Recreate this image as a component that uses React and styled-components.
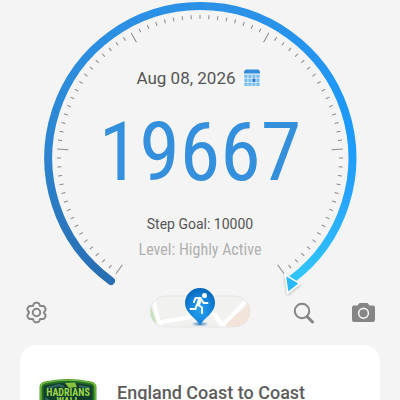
import styled, { createGlobalStyle } from "styled-components";

const GlobalStyle = createGlobalStyle`
* {
    box-sizing: border-box;
}
body {
    margin: 0;
    background: #f4f4f4;
    font-family: Roboto, sans-serif;
    color: #555;
    overflow-x: hidden;
}
`
const Page = styled.main`
display: flex;
flex-direction: column;
min-height: 100vh;
overflow: hidden;
`
const Dial = styled.section`
display: grid;
justify-items: center;
> * {
    grid-area: 1 / 1;
}
`
const Gauge = styled.svg`
display: block;
width: 320px;
height: 296px;
`
const Readout = styled.div`
display: flex;
flex-direction: column;
align-items: center;
padding-top: 66px;
white-space: nowrap;
`
const DateButton = styled.button`
display: flex;
align-items: center;
gap: 8px;
padding: 0 4px 0 0;
border: 0;
background: none;
color: #555;
font: 400 17px/24px Roboto, sans-serif;
cursor: pointer;
`
const Steps = styled.div`
font: 400 82px/96px "Roboto Condensed", "Liberation Sans Narrow", sans-serif;
color: #348fdd;
margin-top: 14px;
`
const Goal = styled.div`
font-size: 14px;
line-height: 20px;
margin-top: 14px;
`
const Level = styled.div`
font: 400 16px/20px "Roboto Condensed", "Liberation Sans Narrow", sans-serif;
color: #b0b0b0;
margin-top: 6px;
`
const Toolbar = styled.nav`
display: grid;
grid-template-columns: 1fr auto 1fr;
align-items: center;
height: 48px;
margin-top: -8px;
padding: 0 24px;
`
const Group = styled.div`
display: flex;
align-items: center;
justify-content: ${props => props.$end ? 'flex-end' : 'flex-start'};
gap: 36px;
`
const IconButton = styled.button`
display: flex;
padding: 0;
border: 0;
background: none;
color: #858585;
cursor: pointer;
`
const Card = styled.article`
display: flex;
align-items: flex-start;
gap: 20px;
flex: 1;
margin: 9px 20px 0;
padding: 33px 19px 0;
border-radius: 16px 16px 0 0;
background: #fff;
`
const CardTitle = styled.h2`
margin: 3px 0 0;
font-size: 18px;
line-height: 24px;
font-weight: 500;
color: #5c5c5c;
`

const SWEEP = 288
const TICKS = 80
const ticks = Array.from({ length: TICKS + 1 }, (_, i) => ({
    angle: 36 + (i * SWEEP) / TICKS,
    major: i % 16 === 0,
}))

const StepGauge = () => (
    <Gauge viewBox="40 0 320 296" aria-hidden="true">
        <defs>
            <linearGradient id="arcLeft" x1="0" y1="6" x2="0" y2="282" gradientUnits="userSpaceOnUse">
                <stop offset="0" stopColor="#2b91e6" />
                <stop offset="0.5" stopColor="#2d86d2" />
                <stop offset="1" stopColor="#286eb2" />
            </linearGradient>
            <linearGradient id="arcRight" x1="0" y1="6" x2="0" y2="282" gradientUnits="userSpaceOnUse">
                <stop offset="0" stopColor="#2b91e6" />
                <stop offset="0.45" stopColor="#1b9afd" />
                <stop offset="0.68" stopColor="#27a3ff" />
                <stop offset="1" stopColor="#31c8fb" />
            </linearGradient>
            <filter id="arrowShadow" x="-50%" y="-50%" width="200%" height="200%">
                <feDropShadow dx="0" dy="1" stdDeviation="1.5" floodOpacity="0.3" />
            </filter>
        </defs>
        {ticks.map(({ angle, major }) => (
            <line
                key={angle}
                x1="200"
                x2="200"
                y1={major ? 290 : 297}
                y2="301"
                stroke="#8a8a8a"
                strokeWidth="1"
                transform={`rotate(${angle} 200 158)`}
            />
        ))}
        <path d="M200 6A152 152 0 0 1 291 280" fill="none" stroke="url(#arcRight)" strokeWidth="8" />
        <path d="M111 281A152 152 0 0 1 201 6" fill="none" stroke="url(#arcLeft)" strokeWidth="8" strokeLinecap="round" />
        <g filter="url(#arrowShadow)">
            <path d="M285.500 275L299 283.500L288 292.500Z" fill="#fff" stroke="#fff" strokeWidth="2" />
            <path d="M286.200 276.200L298.300 283.600L288.300 291.500Z" fill="#2cb9f8" />
        </g>
    </Gauge>
)

const CalendarIcon = () => (
    <svg width="16" height="18" viewBox="0 0 16 18" aria-hidden="true">
        <path d="M0 4.600V3.500Q0 0.500 3 0.500H13Q16 0.500 16 3.500V4.600Z" fill="#358cdb" />
        {[0, 1, 2, 3].map(col => [0, 1, 2].map(row => (
            <rect
                key={`${col}-${row}`}
                x={col * 4 + 0.3}
                y={row * 4 + 5.6}
                width="3.300"
                height="3.300"
                rx="0.6"
                fill={col === 2 && row === 1 ? '#2f80cf' : '#79bff2'}
            />
        )))}
    </svg>
)

const gearOutline = Array.from({ length: 120 }, (_, i) => {
    const a = (i * Math.PI) / 60
    const r = 8.6 + 1.1 * Math.cos(6 * a) - 0.3 * Math.cos(12 * a)
    return `${(12 + r * Math.sin(a)).toFixed(2)},${(12 - r * Math.cos(a)).toFixed(2)}`
}).join(' ')

const GearIcon = () => (
    <svg width="25" height="25" viewBox="0 0 24 24" fill="none" stroke="currentColor" strokeWidth="1.900" strokeLinejoin="round" aria-hidden="true">
        <polygon points={gearOutline} />
        <circle cx="12" cy="12" r="3.600" />
    </svg>
)

const SearchIcon = () => (
    <svg width="22" height="24" viewBox="0 0 22 24" fill="none" stroke="currentColor" aria-hidden="true">
        <circle cx="9" cy="11" r="7.200" strokeWidth="2" />
        <path d="M14 16.500L19.500 22" strokeWidth="3" strokeLinecap="round" />
    </svg>
)

const CameraIcon = () => (
    <svg width="25" height="24" viewBox="0 0 25 24" aria-hidden="true">
        <path d="M3 5.500H6.500L8.500 3H16.500L18.500 5.500H22Q24 5.500 24 7.500V20Q24 22 22 22H3Q1 22 1 20V7.500Q1 5.500 3 5.500Z" fill="currentColor" />
        <circle cx="12.500" cy="13.300" r="4.900" fill="none" stroke="#f4f4f4" strokeWidth="1.600" />
    </svg>
)

const MapPill = () => (
    <svg width="104" height="48" viewBox="148 288 104 48" aria-hidden="true">
        <defs>
            <clipPath id="pill"><rect x="150" y="296" width="100" height="31" rx="15.500" /></clipPath>
            <radialGradient id="pin" cx="0.5" cy="0.6" r="0.6">
                <stop offset="0" stopColor="#27a0f0" />
                <stop offset="0.6" stopColor="#1384db" />
                <stop offset="1" stopColor="#0668bb" />
            </radialGradient>
            <radialGradient id="pinShadow">
                <stop offset="0" stopColor="#0c5ea5" stopOpacity="0.8" />
                <stop offset="1" stopColor="#0c5ea5" stopOpacity="0" />
            </radialGradient>
        </defs>
        <g clipPath="url(#pill)">
            <rect x="150" y="296" width="100" height="31" fill="#f1f1f0" />
            <path d="M150 304L158 327H150Z" fill="#c9dfbd" />
            <path d="M250 303L222 327H250Z" fill="#f3e3da" />
            <path d="M153 298L160 327M157 323L190 317M188 296L190 317M211 312L225 328M249 298L221 327M215 314L223 326" fill="none" stroke="#fff" strokeWidth="4" />
        </g>
        <rect x="150" y="296" width="100" height="31" rx="15.500" fill="none" stroke="#e5e5e5" />
        <ellipse cx="200" cy="324" rx="9" ry="2.500" fill="url(#pinShadow)" />
        <path d="M200 325C196 318 185 313 185 303A15 15 0 0 1 215 303C215 313 204 318 200 325Z" fill="url(#pin)" />
        <circle cx="204.500" cy="295.500" r="2.500" fill="#fff" />
        <path d="M194 302L195.500 298H200.500L197.500 304.500L202 307.500V313M200.500 298L203.500 303H207.500M197 304.500L195.500 309H190.500" fill="none" stroke="#fff" strokeWidth="2" strokeLinejoin="round" strokeLinecap="round" />
        <path d="M198 298.500L202 299.500L200 305L196.500 303.500Z" fill="#fff" />
    </svg>
)

const BadgeText = styled.text`
font: 700 10px "Roboto Condensed", "Liberation Sans Narrow", sans-serif;
text-anchor: middle;
fill: #9bd64a;
`

const WallBadge = () => (
    <svg width="58" height="50" viewBox="0 0 58 50" role="img" aria-label="Hadrians Wall">
        <path d="M1 9Q1 5 6 4Q29-1 52 4Q57 5 57 9V40Q57 49 48 49H10Q1 49 1 40Z" fill="#7cc832" stroke="#4e9a35" strokeWidth="1" />
        <path d="M3.500 10Q3.500 6.500 8 6Q29 1.500 50 6Q54.500 6.500 54.500 10V40Q54.500 46 47 46H11Q3.500 46 3.500 40Z" fill="#123f2b" stroke="#226b29" strokeWidth="2" />
        <path d="M26 5L36 4.500L38 9L30 10Z" fill="#86c440" />
        <path d="M8 10L20 7L25 9M40 8L51 10M6 20L12 24" stroke="#2f6763" strokeWidth="2" fill="none" />
        <BadgeText x="29" y="18">HADRIANS</BadgeText>
        <BadgeText x="29" y="27">WALL</BadgeText>
    </svg>
)

const App = () => {
    return (
        <>
            <GlobalStyle />
            <Page>
                <Dial>
                    <StepGauge />
                    <Readout>
                        <DateButton type="button">
                            Aug 08, 2026
                            <CalendarIcon />
                        </DateButton>
                        <Steps>19667</Steps>
                        <Goal>Step Goal: 10000</Goal>
                        <Level>Level: Highly Active</Level>
                    </Readout>
                </Dial>
                <Toolbar>
                    <Group>
                        <IconButton type="button" aria-label="Settings"><GearIcon /></IconButton>
                    </Group>
                    <IconButton type="button" aria-label="Map"><MapPill /></IconButton>
                    <Group $end>
                        <IconButton type="button" aria-label="Search"><SearchIcon /></IconButton>
                        <IconButton type="button" aria-label="Camera"><CameraIcon /></IconButton>
                    </Group>
                </Toolbar>
                <Card>
                    <WallBadge />
                    <CardTitle>England Coast to Coast</CardTitle>
                </Card>
            </Page>
        </>
    )
}
export default App;
